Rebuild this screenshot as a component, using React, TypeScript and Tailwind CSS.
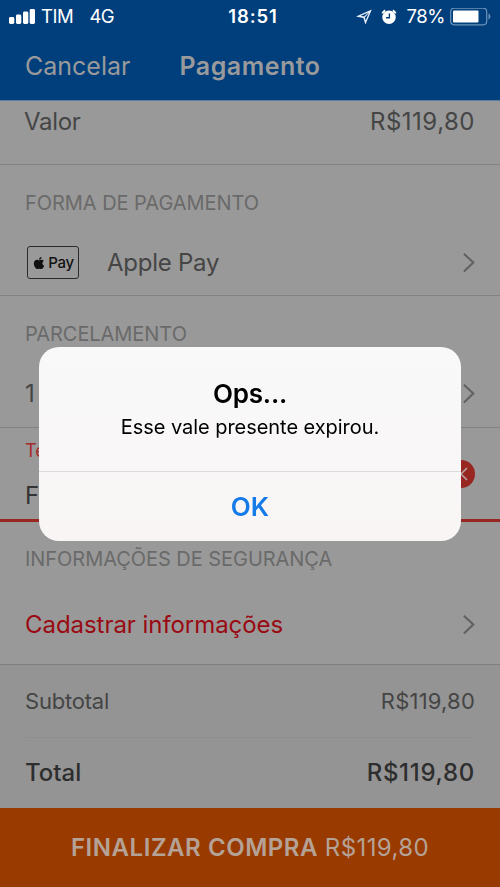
import type {ReactNode} from "react";
import {FaApple} from "react-icons/fa";

const Chevron = () => (
    <svg className="w-3 h-5 shrink-0" viewBox="0 0 12 20" fill="none" stroke="#616161" strokeWidth="2.1">
        <path d="M0.9 0.8L10.3 9.6L0.9 18.4"/>
    </svg>
);

const Heading = ({children}: { children: ReactNode }) => (
    <h2 className="text-[20px] leading-6 tracking-[-0.05px] text-[#6a6a6a]">{children}</h2>
);

const StatusBar = () => (
    <div className="grid grid-cols-[1fr_auto_1fr] items-center h-[33px] pl-[9px] pr-[9px] text-[18.5px] leading-[33px] text-white">
        <div className="flex items-center">
            <svg className="w-[26px] h-4 mr-[6px]" viewBox="0 0 26 16" fill="#fff">
                <rect x="0" y="8" width="5.3" height="7" rx="1.4"/>
                <rect x="7" y="5.5" width="5.3" height="9.5" rx="1.4"/>
                <rect x="14" y="2.5" width="5.3" height="12.5" rx="1.4"/>
                <rect x="20.7" y="0" width="5.3" height="15" rx="1.4"/>
            </svg>
            <span className="tracking-[-0.4px]">TIM</span>
            <span className="ml-[16px] tracking-[-0.6px]">4G</span>
        </div>
        <span className="pl-[6px] font-semibold tracking-[0.9px]">18:51</span>
        <div className="flex items-center justify-end">
            <svg className="w-4 h-4 mr-[9px]" viewBox="0 0 16 16">
                <path fillRule="evenodd" d="M15.8 0.6L0 7.4L7.4 8.9L9.4 15.6ZM12.2 3.5L4.8 6.8L8.2 7.6ZM13 3.8L8.9 8.4L9.7 11.6Z" fill="#e8f0fa"/>
            </svg>
            <svg className="w-4 h-4 mr-[9px]" viewBox="0 0 16 16" fill="none">
                <circle cx="8" cy="8.2" r="6.7" fill="#fff"/>
                <path d="M1.3 4.4A8 8 0 0 1 4.2 1.4M14.7 4.4A8 8 0 0 0 11.8 1.4" stroke="#fff" strokeWidth="1.9"/>
                <path d="M8.4 4.4V8.8H5" stroke="#003f7b" strokeWidth="1.4"/>
            </svg>
            <span className="tracking-[-0.4px]">78%</span>
            <svg className="w-[41px] h-[18px] ml-[5px]" viewBox="0 0 41 18">
                <rect x="0.7" y="0.2" width="36" height="16.6" rx="3.5" fill="none" stroke="#6c93bb" strokeWidth="1.2"/>
                <rect x="3" y="2.5" width="25.5" height="12" rx="1" fill="#fff"/>
                <path d="M38.5 5.5C41 6.5 41 10.5 38.5 11.5Z" fill="#6c93bb"/>
            </svg>
        </div>
    </div>
);

const Header = () => (
    <header className="h-[101px] bg-[#003f7b] border-b border-[#5d7ca0]">
        <StatusBar/>
        <div className="grid grid-cols-[1fr_auto_1fr] items-center h-[67px] px-[25px] text-[25px] text-[#9a9a9c]">
            <span>Cancelar</span>
            <h1 className="font-semibold tracking-[0.5px]">Pagamento</h1>
        </div>
    </header>
);

const Alert = () => (
    <div className="fixed inset-0 flex justify-center items-start pt-[347px]">
        <div role="alertdialog" className="w-[422px] h-[194px] flex flex-col rounded-[20px] overflow-hidden bg-linear-to-b from-[#f9f9fa] to-[#f9f5f5] text-center text-black">
            <div className="h-[125px] pt-[31px] border-b border-[#dcdadb]">
                <h3 className="text-[26px] leading-8 font-semibold tracking-[-0.2px]">Ops...</h3>
                <p className="text-[20px] leading-[34px] tracking-[-0.05px]">Esse vale presente expirou.</p>
            </div>
            <button className="flex-1 text-[26px] font-semibold text-[#147be8]">OK</button>
        </div>
    </div>
);

const App = () => {
    return (
        <div className="w-full h-[887px] overflow-hidden flex flex-col bg-[#999] font-['Inter',sans-serif] text-[#454545]">
            <Header/>

            <main className="text-[24px] leading-8">
                <div className="flex justify-between h-16 pl-6 pr-[25px] pt-[5px] border-b border-[#828282]">
                    <span className="tracking-[-0.3px]">Valor</span>
                    <span className="tracking-[0.5px]">R$119,80</span>
                </div>

                <section className="h-[131px] px-[25px] pt-[26px] border-b border-[#828282]">
                    <Heading>FORMA DE PAGAMENTO</Heading>
                    <div className="flex items-center mt-[31px]">
                        <span className="flex items-center justify-center gap-[2px] w-[52px] h-[33px] ml-[2px] mr-7 rounded-[3px] border border-[#2b2b2b] text-[15px] font-medium tracking-[-0.4px] text-[#111]">
                            <FaApple className="text-[14px]"/>
                            Pay
                        </span>
                        <span className="flex-1 tracking-[-0.25px]">Apple Pay</span>
                        <Chevron/>
                    </div>
                </section>

                <section className="h-[132px] px-[25px] pt-[26px] border-b border-[#828282]">
                    <Heading>PARCELAMENTO</Heading>
                    <div className="flex items-center justify-between mt-8">
                        <span>1</span>
                        <Chevron/>
                    </div>
                </section>

                {/* gift card field, in its error state */}
                <section className="flex items-center justify-between h-[94px] px-[25px] border-b-3 border-[#972720]">
                    <div className="pt-[3px]">
                        <p className="text-[18px] leading-6 text-[#a52a2a]">Te</p>
                        <p className="mt-[17px] text-[#333]">F</p>
                    </div>
                    <svg className="w-7 h-7" viewBox="0 0 28 28">
                        <circle cx="14" cy="14" r="14" fill="#972720"/>
                        <path d="M8 8L20 20M20 8L8 20" stroke="#b5a5a3" strokeWidth="1.6"/>
                    </svg>
                </section>

                <section className="h-[143px] px-[25px] pt-[25px] border-b border-[#7e7e7e]">
                    <Heading>INFORMAÇÕES DE SEGURANÇA</Heading>
                    <div className="flex items-center justify-between mt-[38px] text-[#990a12]">
                        <span className="tracking-[-0.05px]">Cadastrar informações</span>
                        <Chevron/>
                    </div>
                </section>

                <section className="h-[143px] px-[25px] bg-[#949494]">
                    <div className="flex items-center justify-between h-[73px] border-b border-[#8f8f8f] text-[22px]">
                        <span className="tracking-[-0.2px]">Subtotal</span>
                        <span className="tracking-[0.2px]">R$119,80</span>
                    </div>
                    <div className="flex items-center justify-between h-[69px] font-medium text-[#2e2e2e]">
                        <span>Total</span>
                        <span className="tracking-[0.7px]">R$119,80</span>
                    </div>
                </section>
            </main>

            <button className="flex-1 bg-[#993b00] text-[24px] text-[#b5a296]">
                <span className="font-semibold tracking-[0.55px]">FINALIZAR COMPRA</span>{" "}
                <span className="tracking-[0.4px]">R$119,80</span>
            </button>

            <Alert/>
        </div>
    );
};

export default App;
